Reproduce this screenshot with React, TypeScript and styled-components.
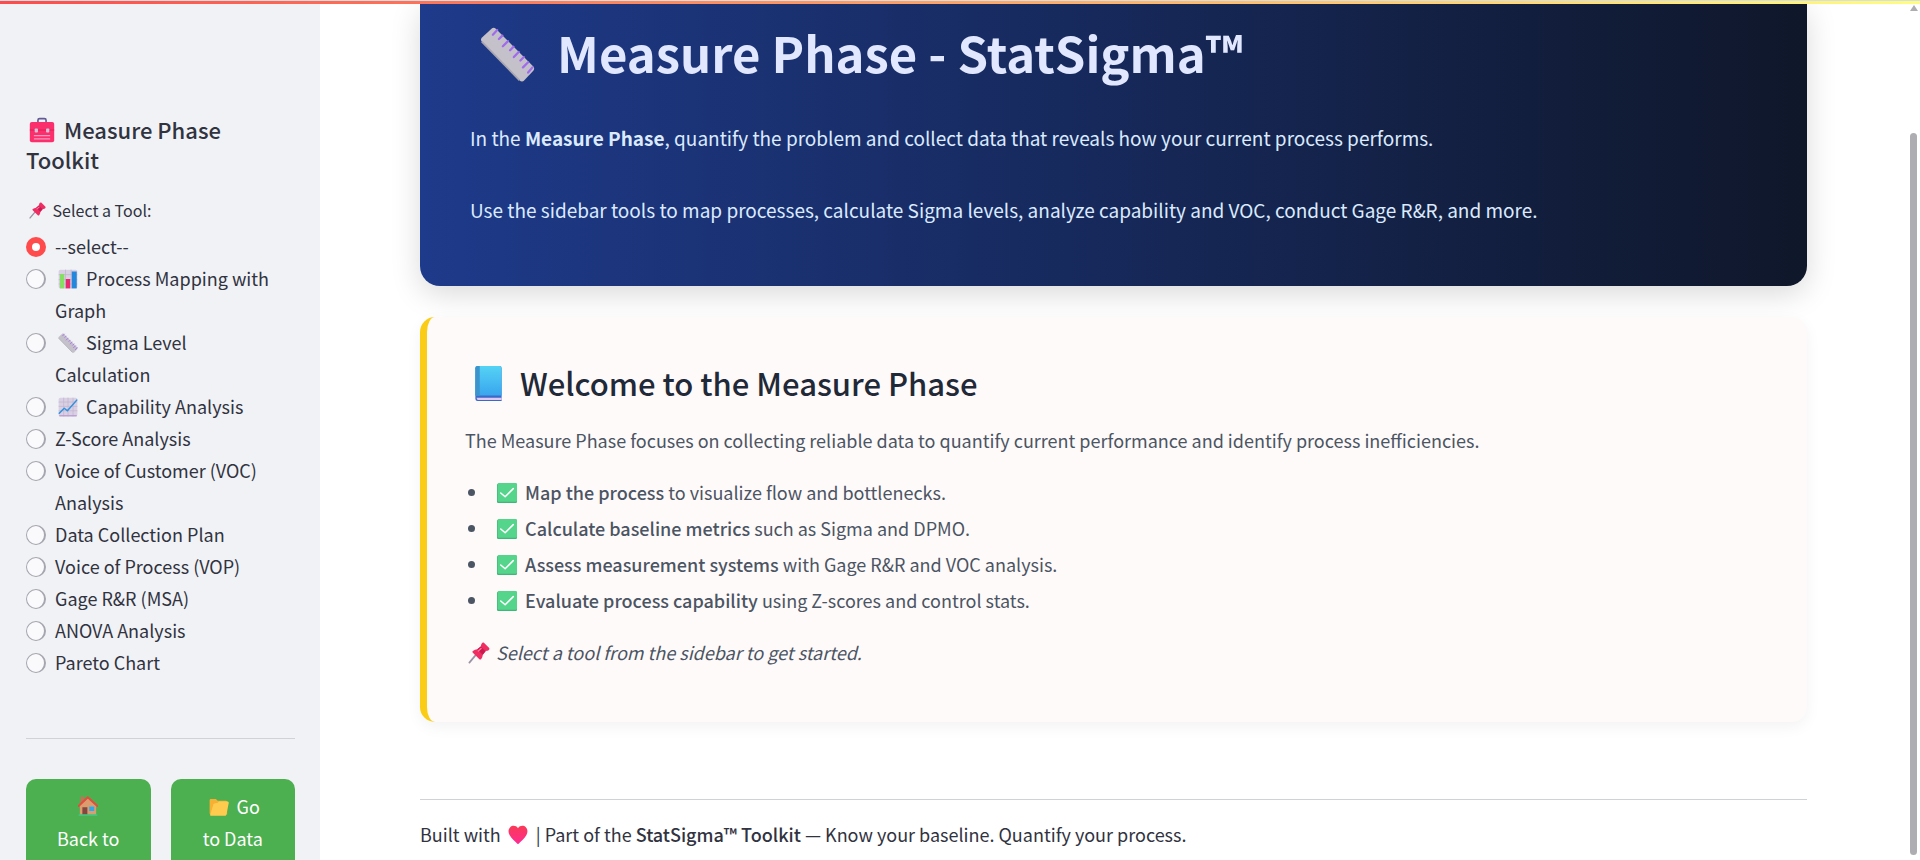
import React, { useState } from "react";
import styled, { createGlobalStyle } from "styled-components";

const GlobalStyle = createGlobalStyle`
  * { box-sizing: border-box; }
  body {
    margin: 0;
    background: #ffffff;
    color: #31333f;
    font-family: "Noto Sans CJK SC", "Noto Sans", sans-serif;
    font-size: 18px;
    line-height: 32px;
  }
  h1, h2, p, ul { margin: 0; padding: 0; }
`;

/* ---------- page shell ---------- */

const Page = styled.div`
  position: relative;
  display: flex;
  flex-direction: column;
  height: 100vh;
  overflow: hidden;
`;

const Decoration = styled.div`
  flex: none;
  height: 4px;
  border-top: 1px solid #d3dfe8;
  background: linear-gradient(90deg, #ff4b4b, #fffd80) padding-box;
`;

const Columns = styled.div`
  display: flex;
  flex: 1;
  min-height: 0;
`;

const Sidebar = styled.aside`
  flex: none;
  width: 320px;
  padding: 110px 25px 0 26px;
  overflow: hidden;
  background: #f0f2f6;
`;

const Main = styled.main`
  flex: 1;
  min-width: 0;
  padding: 0 113px 0 100px;
  overflow: hidden;
`;

/* ---------- sidebar ---------- */

const SidebarTitle = styled.h2`
  font-size: 22px;
  line-height: 30px;
  font-weight: 500;
`;

const ToolGroup = styled.fieldset`
  margin: 21px 0 0;
  padding: 0;
  border: 0;
`;

const GroupLabel = styled.legend`
  padding: 0 0 5px;
  font-size: 16px;
  line-height: 30px;
`;

const Option = styled.label`
  display: flex;
  align-items: flex-start;
  gap: 9px;
  padding-right: 20px;
  cursor: pointer;
`;

const Radio = styled.input`
  appearance: none;
  flex: none;
  width: 20px;
  height: 20px;
  margin: 7px 0 0;
  border: 1px solid #a5a6ae;
  border-right-width: 2px;
  border-radius: 50%;
  background: #fafafc;

  &:checked {
    border: 6px solid #ff4b4b;
    background: #ffffff;
  }
`;

const Divider = styled.hr<{ $top: number; $bottom: number }>`
  height: 1px;
  margin: ${(p) => p.$top}px 0 ${(p) => p.$bottom}px;
  border: 0;
  background: #d1d2d6;
`;

const ButtonRow = styled.div`
  display: grid;
  grid-template-columns: 1fr 1fr;
  gap: 20px;
`;

const NavButton = styled.button`
  min-height: 120px;
  padding: 11px 24px;
  border: 0;
  border-radius: 10px;
  background: #4caf50;
  color: #ffffff;
  font: inherit;
  display: flex;
  align-items: flex-start;
  justify-content: center;
`;

/* ---------- hero ---------- */

const Hero = styled.section`
  padding: 14px 50px 58px;
  border-radius: 0 0 20px 20px;
  background: linear-gradient(90deg, #1e3a8a, #0f172a);
  box-shadow: 0 8px 30px rgba(0, 0, 0, 0.15);
  color: #dbeafe;
`;

const HeroTitle = styled.h1`
  margin-bottom: 34px;
  color: #e0e7ff;
  font-size: 49px;
  line-height: 68px;
  font-weight: 700;
`;

const HeroText = styled.p`
  font-size: 19px;
  line-height: 36px;

  & + & { margin-top: 36px; }
`;

/* ---------- welcome card ---------- */

const Card = styled.section`
  margin-top: 31px;
  padding: 45px 38px 52px;
  border-left: 7px solid #facc15;
  border-radius: 15px;
  background: #fffafa;
  box-shadow: 0 5px 15px rgba(0, 0, 0, 0.05);
  color: #4b5563;
  line-height: 36px;
`;

const CardTitle = styled.h2`
  margin-bottom: 18px;
  color: #1f2937;
  font-size: 31px;
  line-height: 42px;
  font-weight: 500;
`;

const Steps = styled.ul`
  margin: 16px 0;
  list-style: none;
`;

const Step = styled.li`
  display: flex;
  align-items: center;

  &::before {
    content: "";
    width: 7px;
    height: 7px;
    margin: 0 19px 0 3px;
    border-radius: 50%;
    background: currentColor;
  }
`;

const Strong = styled.strong`
  font-weight: 500;
`;

const Footer = styled.footer`
  white-space: nowrap;
`;

/* ---------- scrollbar ---------- */

const ScrollRail = styled.div`
  position: absolute;
  top: 5px;
  right: 3px;
  bottom: 5px;
  width: 7px;
  display: flex;
  flex-direction: column;
  justify-content: space-between;
`;

const ScrollThumb = styled.div`
  height: 85%;
  border-radius: 4px;
  background: #aeadb2;
`;

const ScrollArrow = styled.div`
  width: 8px;
  height: 6px;
  background: #aeadb2;
  clip-path: polygon(50% 0, 100% 100%, 0 100%);
`;

/* ---------- emoji ---------- */

const Emoji = styled.svg<{ $size: number; $drop: number; $left?: number; $right?: number }>`
  width: ${(p) => p.$size}px;
  height: ${(p) => p.$size}px;
  margin: 0 ${(p) => p.$right ?? 4}px 0 ${(p) => p.$left ?? 3}px;
  vertical-align: -${(p) => p.$drop}px;
`;

type IconProps = { size: number; drop: number; left?: number; right?: number };

const icon = (art: React.ReactNode) =>
  function Icon({ size, drop, left, right }: IconProps) {
    return (
      <Emoji viewBox="0 0 32 32" aria-hidden="true" $size={size} $drop={drop} $left={left} $right={right}>
        {art}
      </Emoji>
    );
  };

const Toolbox = icon(
  <>
    <path d="M11 7V4a2 2 0 0 1 2-2h6a2 2 0 0 1 2 2v3" fill="none" stroke="#635994" strokeWidth="2" />
    <rect x="1" y="6" width="30" height="25" rx="2.5" fill="#fb2f6b" />
    <path d="M1 16h30" stroke="#d51c54" strokeWidth="1" />
    <rect x="7" y="14" width="4" height="5" rx="1" fill="#cfc3d8" />
    <rect x="21" y="14" width="4" height="5" rx="1" fill="#cfc3d8" />
    <path d="M6 23h20M6 27h20" stroke="#f59ac0" strokeWidth="1.5" />
  </>
);

const Pin = icon(
  <>
    <path d="M2 30 12 18" stroke="#9b93a5" strokeWidth="2.5" strokeLinecap="round" />
    <path d="M20 2c1-1.5 2.5-1.5 3.5-.5l7 7c1 1 1 2.5-.5 3.5-2 1-3.5.8-4.5 1.5l-4 5c-.3 2.5-1 5-2.5 6.5-1 .8-2 .5-2.5 0L7 15.5c-.7-.8-.8-1.7 0-2.5 2-1.3 4.3-2 6.5-2.3l5-4.2C19 5 19 3.5 20 2Z" fill="#ef2d63" />
    <path d="m18.5 6.5 7 7-4 5-8-7.8Z" fill="#c91b4f" />
    <path d="m15 13 4-3.5" stroke="#ff7499" strokeWidth="2" strokeLinecap="round" />
  </>
);

const BarChart = icon(
  <>
    <rect x="1" y="1" width="30" height="30" rx="3" fill="#d9d0e3" />
    <path d="M1 9h30M1 17h30M1 24h30M12 1v30M21 1v30" stroke="#bcb1ca" strokeWidth="1" />
    <path d="M3 8h7v23H3Z" fill="#86df62" />
    <path d="M12.5 16h7v15h-7Z" fill="#e9296e" />
    <path d="M22 4h8v27h-8Z" fill="#2487dc" />
  </>
);

const Ruler = icon(
  <>
    <path d="M1 8.5a2 2 0 0 1 0-2.3L6.7 1a2 2 0 0 1 2.5 0L31 23a2 2 0 0 1 0 2.5L25.8 31a2 2 0 0 1-2.8 0Z" fill="#c5c1ca" />
    <path d="M1 8.5 23 31" stroke="#aaa6b1" strokeWidth="1" />
    <path d="m10 1.8-2.5 2.7M13 5l-2 2M16.3 8.2l-3 3M19.5 11.5l-2 2M22.5 14.5l-2.8 3M25.5 17.5l-2 2M28 20.5l-3 3M30.5 23.5l-2.5 3" stroke="#a06bed" strokeWidth="1.3" strokeLinecap="round" />
  </>
);

const TrendChart = icon(
  <>
    <rect x="1" y="1" width="30" height="30" rx="3" fill="#d9d0e3" />
    <path d="M1 8h30M1 15h30M1 22h30M9 1v30M16 1v30M24 1v30" stroke="#bfb0ce" strokeWidth="1" />
    <path d="M2 30h28" stroke="#bc9bd1" strokeWidth="2" />
    <path d="m2 26 8-8 5 4L30 5" fill="none" stroke="#2d91df" strokeWidth="2.4" strokeLinecap="round" strokeLinejoin="round" />
  </>
);

const House = icon(
  <>
    <path d="M4 1h6v12H4Z" fill="#bb7656" />
    <path d="M3 15 16 4l13 12v14H3Z" fill="#dc9c6d" />
    <path d="m1 16 14.5-14L31 16" fill="none" stroke="#ea493f" strokeWidth="3" strokeLinecap="round" strokeLinejoin="round" />
    <rect x="7" y="18" width="8" height="12" fill="#81483f" />
    <rect x="18" y="17" width="8" height="7" fill="#28aaf0" />
    <path d="M1 30.5h30" stroke="#3fc982" strokeWidth="2.5" />
  </>
);

const Folder = icon(
  <>
    <path d="M1 5a2 2 0 0 1 2-2h8l3 3h13a2 2 0 0 1 2 2v20H3a2 2 0 0 1-2-2Z" fill="#f7af34" />
    <path d="M7 12a2 2 0 0 1 2-1.5L14 9l2-2h13c2 0 3 1 2.5 3L28 27c-.4 2-1 3-3 3H3c-1 0-1.5-1-1-2Z" fill="#ffcb4f" />
  </>
);

const Book = icon(
  <>
    <defs>
      <linearGradient id="cover" x1="0" y1="0" x2="0" y2="1">
        <stop offset="0" stopColor="#55d3f5" />
        <stop offset="1" stopColor="#39a5ee" />
      </linearGradient>
    </defs>
    <path d="M4 2a2 2 0 0 1 2-2h20a2 2 0 0 1 2 2v30H6a2 2 0 0 1-2-2Z" fill="#3a6ac8" />
    <path d="M5 29h23v2H6Z" fill="#dfc8ef" />
    <path d="M4 2a2 2 0 0 1 2-2h20a2 2 0 0 1 2 2v25H4Z" fill="url(#cover)" />
    <path d="M4 2a2 2 0 0 1 2-2h2v27H4Z" fill="#3b94cc" />
  </>
);

const Check = icon(
  <>
    <rect x="0" y="1" width="32" height="31" rx="2" fill="#3fb67a" />
    <rect x="1" y="0" width="31" height="30" rx="2" fill="#55d48b" />
    <path d="m6 16 7 6L26 9" fill="none" stroke="#ffffff" strokeWidth="2.5" strokeLinecap="round" strokeLinejoin="round" />
  </>
);

const Heart = icon(
  <>
    <defs>
      <linearGradient id="love" x1="0" y1="0" x2="0" y2="1">
        <stop offset="0" stopColor="#f93a55" />
        <stop offset="1" stopColor="#ff2b91" />
      </linearGradient>
    </defs>
    <path d="M16 5c3-4.5 9-5 12.5-1.5C32 7 31.7 12 29.5 16 26.5 21.5 21 26 17 30c-.7.6-1.3.6-2 0C11 26 5.5 21.5 2.5 16 .3 12 0 7 3.5 3.5 7 0 13 .5 16 5Z" fill="url(#love)" />
  </>
);

/* ---------- content ---------- */

type Tool = { name: string; Icon?: (p: IconProps) => React.ReactElement };

const tools: Tool[] = [
  { name: "--select--" },
  { name: "Process Mapping with Graph", Icon: BarChart },
  { name: "Sigma Level Calculation", Icon: Ruler },
  { name: "Capability Analysis", Icon: TrendChart },
  { name: "Z-Score Analysis" },
  { name: "Voice of Customer (VOC) Analysis" },
  { name: "Data Collection Plan" },
  { name: "Voice of Process (VOP)" },
  { name: "Gage R&R (MSA)" },
  { name: "ANOVA Analysis" },
  { name: "Pareto Chart" },
];

const steps = [
  { lead: "Map the process", rest: "to visualize flow and bottlenecks." },
  { lead: "Calculate baseline metrics", rest: "such as Sigma and DPMO." },
  { lead: "Assess measurement systems", rest: "with Gage R&R and VOC analysis." },
  { lead: "Evaluate process capability", rest: "using Z-scores and control stats." },
];

export default function App() {
  const [selected, setSelected] = useState(tools[0].name);

  return (
    <>
      <GlobalStyle />
      <Page>
        <Decoration />
        <Columns>
          <Sidebar>
            <SidebarTitle>
              <Toolbox size={26} drop={4} /> Measure Phase Toolkit
            </SidebarTitle>
            <ToolGroup>
              <GroupLabel>
                <Pin size={17} drop={2} right={3} /> Select a Tool:
              </GroupLabel>
              {tools.map(({ name, Icon }) => (
                <Option key={name}>
                  <Radio
                    type="radio"
                    name="tool"
                    checked={selected === name}
                    onChange={() => setSelected(name)}
                  />
                  <span>
                    {Icon && (
                      <>
                        <Icon size={20} drop={3} />{" "}
                      </>
                    )}
                    {name}
                  </span>
                </Option>
              ))}
            </ToolGroup>
            <Divider $top={60} $bottom={40} />
            <ButtonRow>
              <NavButton type="button">
                <span>
                  <House size={20} drop={2} left={0} right={0} />
                  <br />
                  Back to
                </span>
              </NavButton>
              <NavButton type="button">
                <span>
                  <Folder size={20} drop={3} /> Go
                  <br />
                  to Data
                </span>
              </NavButton>
            </ButtonRow>
          </Sidebar>

          <Main>
            <Hero>
              <HeroTitle>
                <Ruler size={55} drop={9} left={10} right={11} /> Measure Phase - StatSigma™
              </HeroTitle>
              <HeroText>
                In the <strong>Measure Phase</strong>, quantify the problem and collect data that
                reveals how your current process performs.
              </HeroText>
              <HeroText>
                Use the sidebar tools to map processes, calculate Sigma levels, analyze capability
                and VOC, conduct Gage R&amp;R, and more.
              </HeroText>
            </Hero>

            <Card>
              <CardTitle>
                <Book size={35} drop={5} left={6} right={7} /> Welcome to the Measure Phase
              </CardTitle>
              <p>
                The Measure Phase focuses on collecting reliable data to quantify current
                performance and identify process inefficiencies.
              </p>
              <Steps>
                {steps.map(({ lead, rest }) => (
                  <Step key={lead}>
                    <span>
                      <Check size={20} drop={3} /> <Strong>{lead}</Strong> {rest}
                    </span>
                  </Step>
                ))}
              </Steps>
              <p>
                <Pin size={22} drop={4} right={2} /> <em>Select a tool from the sidebar to get started.</em>
              </p>
            </Card>

            <Divider $top={77} $bottom={18} />
            <Footer>
              Built with <Heart size={20} drop={3} /> | Part of the{" "}
              <Strong>StatSigma™ Toolkit</Strong> — Know your baseline. Quantify your process.
            </Footer>
          </Main>
        </Columns>
        <ScrollRail aria-hidden="true">
          <ScrollArrow />
          <ScrollThumb />
        </ScrollRail>
      </Page>
    </>
  );
}
